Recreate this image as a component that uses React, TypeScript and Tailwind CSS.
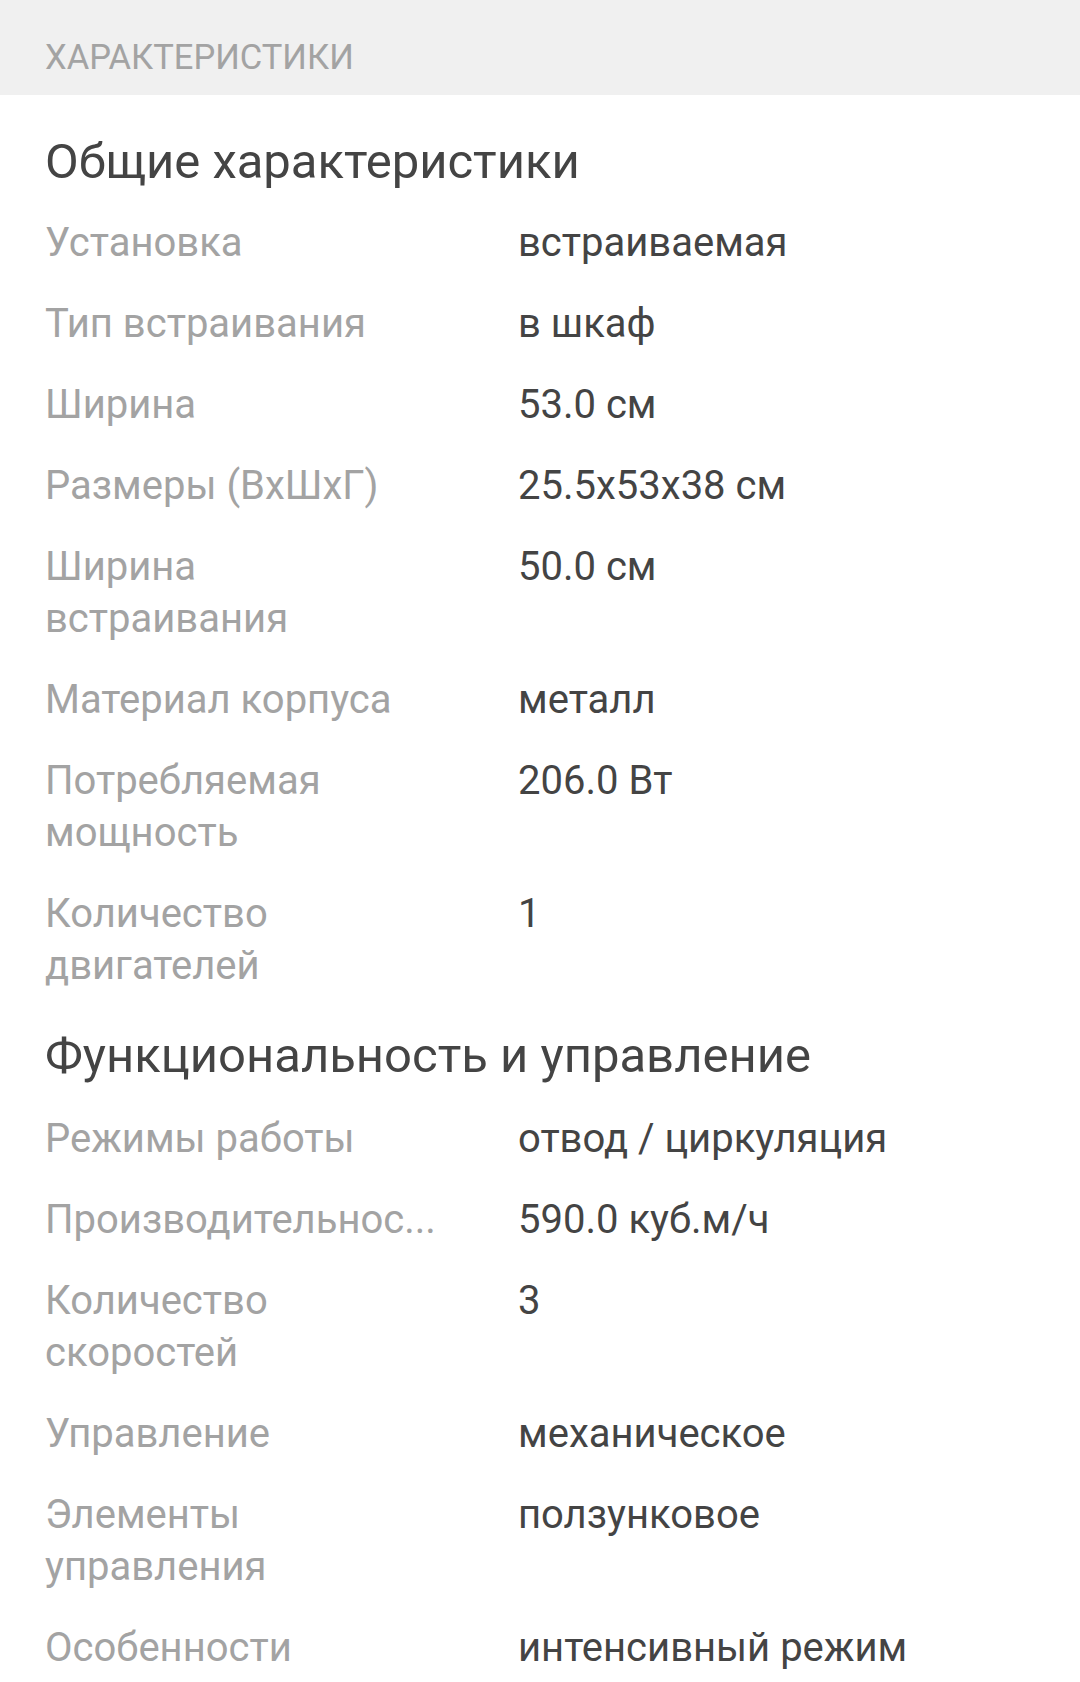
const general: [string, string][] = [
  ["Установка", "встраиваемая"],
  ["Тип встраивания", "в шкаф"],
  ["Ширина", "53.0 см"],
  ["Размеры (ВхШхГ)", "25.5x53x38 см"],
  ["Ширина встраивания", "50.0 см"],
  ["Материал корпуса", "металл"],
  ["Потребляемая мощность", "206.0 Вт"],
  ["Количество двигателей", "1"],
]

const controls: [string, string][] = [
  ["Режимы работы", "отвод / циркуляция"],
  ["Производительнос...", "590.0 куб.м/ч"],
  ["Количество скоростей", "3"],
  ["Управление", "механическое"],
  ["Элементы управления", "ползунковое"],
  ["Особенности", "интенсивный режим"],
]

function SpecRow({ label, value }: { label: string; value: string }) {
  return (
    <div className="flex py-[14.5px] text-[40px] leading-[52px]">
      <div className="w-[395px] shrink-0 text-[#a3a3a3]">{label}</div>
      <div className="ml-[78px] text-[#444444]">{value}</div>
    </div>
  )
}

export default function App() {
  return (
    <div className="w-[1080px] min-h-[1682px] bg-white font-['Roboto',sans-serif]">
      {/* заголовок */}
      <div className="h-[95px] bg-[#f0f0f0] px-[45px] pt-[35px] text-[34.5px] leading-[44px] text-[#a3a3a3]">
        ХАРАКТЕРИСТИКИ
      </div>

      <div className="px-[45px]">
        <h2 className="pt-[37px] pb-[10px] text-[49px] leading-[60px] text-[#444444]">Общие характеристики</h2>
        {general.map(([label, value]) => (
          <SpecRow key={label} label={label} value={value} />
        ))}

        <h2 className="pt-[20px] pb-[12px] text-[49px] leading-[60px] text-[#444444]">
          Функциональность и управление
        </h2>
        {controls.map(([label, value]) => (
          <SpecRow key={label} label={label} value={value} />
        ))}
      </div>
    </div>
  )
}
